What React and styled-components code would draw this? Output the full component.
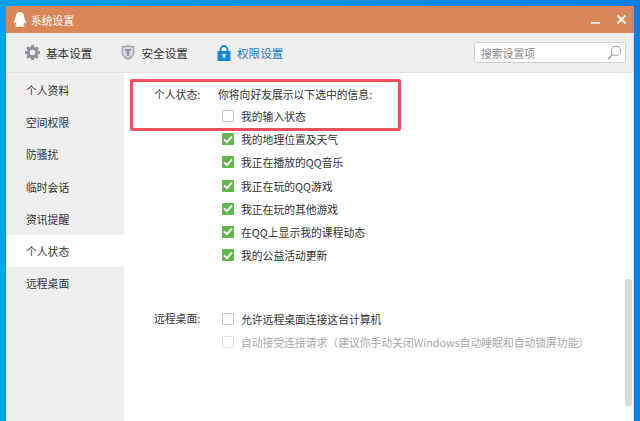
import React from "react";
import styled, { createGlobalStyle } from "styled-components";

const GlobalStyle = createGlobalStyle`
    html, body {
        margin: 0;
        padding: 0;
        height: 421px;
        overflow: hidden;
    }
`;

const Desktop = styled.div`
    width: 640px;
    height: 421px;
    box-sizing: border-box;
    padding: 6px 6px 0 6px;
    overflow: hidden;
    background: linear-gradient(90deg, #00a2ea 0%, #1190e2 50%, #0b7fe6 100%);
    font-family: "Noto Sans CJK SC", "Noto Sans", sans-serif;
    font-size: 10.8px;
    color: #333;
`;

const Window = styled.div`
    position: relative;
    height: 415px;
    display: flex;
    flex-direction: column;
    background: #fff;
    border-left: 1px solid #e4e6e5;
    border-right: 1px solid #d5d7d6;
`;

const TitleBar = styled.div`
    height: 27px;
    flex: none;
    display: flex;
    align-items: center;
    padding: 0 5px 0 8px;
    margin: 0 -1px;
    background: #d98659;
    color: #fff;
`;

const WindowTitle = styled.span`
    margin-left: 5px;
    flex: 1;
    font-size: 10.8px;
`;

const WindowButton = styled.button`
    width: 15px;
    height: 15px;
    margin-left: 11px;
    padding: 0;
    border: 0;
    background: none;
    display: flex;
    align-items: center;
    justify-content: center;
`;

const Toolbar = styled.div`
    height: 39px;
    flex: none;
    display: flex;
    align-items: center;
    padding: 0 7px 0 18px;
    background: #eef0ef;
    border-bottom: 1px solid #e2e3e2;
`;

const Tab = styled.div`
    width: 95.5px;
    display: flex;
    align-items: center;
    gap: 6px;
    font-size: 11.6px;
    color: ${(p) => (p.$active ? "#1b78c0" : "#333")};
`;

const TabIcon = styled.span`
    width: 15px;
    height: 16px;
    display: flex;
    align-items: center;
    justify-content: center;
`;

const SearchBox = styled.div`
    margin-left: auto;
    width: 152px;
    height: 21px;
    box-sizing: border-box;
    display: flex;
    align-items: center;
    justify-content: space-between;
    padding: 0 3px 0 6px;
    background: #fff;
    border: 1px solid #cfd1d0;
    border-radius: 2px;
    color: #888;
`;

const Body = styled.div`
    flex: 1;
    display: flex;
    min-height: 0;
`;

const Sidebar = styled.div`
    width: 117px;
    flex: none;
    box-sizing: border-box;
    padding-top: 1px;
    background: #efefef;
`;

const SideItem = styled.div`
    height: 32.2px;
    display: flex;
    align-items: center;
    padding-left: 19px;
    background: ${(p) => (p.$active ? "#fff" : "transparent")};
`;

const Panel = styled.div`
    flex: 1;
    padding: 10px 0 0 30px;
`;

const Section = styled.div`
    display: grid;
    grid-template-columns: 64px 1fr;
    margin-bottom: 40.6px;
`;

const SectionLabel = styled.div`
    height: 23.2px;
    line-height: 23.2px;
`;

const Options = styled.div`
    display: flex;
    flex-direction: column;
`;

const Note = styled.div`
    height: 21.4px;
    line-height: 23.2px;
`;

const OptionRow = styled.div`
    height: 23.2px;
    display: flex;
    align-items: center;
    gap: 7px;
    padding-left: 4px;
    color: ${(p) => (p.$disabled ? "#a9a9a9" : "#333")};
`;

const Box = styled.span`
    width: 12px;
    height: 12px;
    box-sizing: border-box;
    flex: none;
    display: flex;
    align-items: center;
    justify-content: center;
    border-radius: 1px;
    background: ${(p) => (p.$checked ? "#62b64f" : "#fff")};
    border: ${(p) =>
        p.$checked ? "0" : `1px solid ${p.$disabled ? "#e2e2e2" : "#c4c4c4"}`};
`;

const Highlight = styled.div`
    position: absolute;
    left: 123px;
    top: 73px;
    width: 271px;
    height: 52px;
    box-sizing: border-box;
    border: 3px solid #f1515a;
    border-radius: 2px;
`;

const ScrollThumb = styled.div`
    position: absolute;
    right: 1px;
    top: 273px;
    width: 7px;
    height: 127px;
    border-radius: 3px;
    background: #d9d9d9;
`;

const Penguin = () => (
    <svg width="12" height="15" viewBox="0 0 12 15">
        <path
            fill="#fff"
            d="M6 0C3.300 0 1.800 2 1.800 4.600c0 .8-.2 1.300-.6 2C.5 7.900 0 9.300 0 10.500c0 .8.5.9 1 .3l.6-.8c.3.9.7 1.600 1.200 2.100-.9.3-1.300.8-1.300 1.300C1.500 14.500 2.800 15 4.200 15c.7 0 1.300-.2 1.800-.5.500.3 1.100.5 1.800.5 1.400 0 2.700-.5 2.700-1.100 0-.5-.4-1-1.300-1.300.5-.5.9-1.200 1.200-2.100l.6.800c.5.600 1 .5 1-.3 0-1.200-.5-2.600-1.200-3.900-.4-.7-.6-1.200-.6-2C10.200 2 8.700 0 6 0z"
        />
    </svg>
);

const GearIcon = () => (
    <svg width="15" height="15" viewBox="0 0 15 15">
        <path
            fill="#8b959a"
            fillRule="evenodd"
            d="M6.200 0h2.600l.3 2c.4.1.8.3 1.100.5l1.700-1.100 1.800 1.800-1.100 1.700c.2.300.4.700.5 1.100l1.900.3v2.600l-1.900.3c-.1.400-.3.800-.5 1.100l1.100 1.700-1.800 1.800-1.700-1.100c-.3.200-.7.400-1.100.5l-.3 1.900H6.200l-.3-1.900c-.4-.1-.8-.3-1.100-.5l-1.700 1.100-1.800-1.800 1.100-1.700c-.2-.3-.4-.7-.5-1.100L0 8.800V6.200l1.900-.3c.1-.4.300-.8.500-1.100L1.300 3.100l1.800-1.800 1.700 1.100c.3-.2.7-.4 1.100-.5zM7.500 4.800a2.700 2.700 0 1 0 0 5.400 2.700 2.700 0 0 0 0-5.400z"
        />
    </svg>
);

const ShieldIcon = () => (
    <svg width="14" height="15" viewBox="0 0 14 15">
        <path fill="#a4abad" d="M.5 1.200C2.500 1.200 5 .8 7 0c2 .8 4.500 1.200 6.500 1.200v6.300C13.500 11 10.500 13.500 7 15 3.500 13.500.5 11 .5 7.500z" />
        <path fill="#d3d7d8" d="M2 2.500c1.800-.1 3.500-.4 5-1 1.500.6 3.200.9 5 1v5c0 2.600-2.300 4.600-5 5.800C4.300 12.100 2 10.100 2 7.500z" />
        <path fill="#8d9598" d="M4 4h6v2H8.100v5.300H5.900V6H4z" />
    </svg>
);

const LockIcon = () => (
    <svg width="14" height="16" viewBox="0 0 14 16">
        <path fill="none" stroke="#1b86d8" strokeWidth="1.800" d="M3.500 7V4.500a3.500 3.500 0 0 1 7 0V7" />
        <rect x="0.500" y="6" width="13" height="10" rx="1" fill="#1b86d8" />
        <path fill="#fff" d="M5.200 9h3.600v1.600H7.800V13H6.200v-2.400h-1z" />
    </svg>
);

const SearchIcon = () => (
    <svg width="15" height="15" viewBox="0 0 15 15" fill="none" stroke="#a3a3a3" strokeWidth="1">
        <circle cx="9" cy="6" r="4.700" />
        <path d="M5.600 9.400 1 14" strokeWidth="1.500" />
    </svg>
);

const Check = () => (
    <svg width="10" height="9" viewBox="0 0 10 9" fill="none" stroke="#fff" strokeWidth="1.900">
        <path d="M1 4.300 3.900 7.200 9 1.500" />
    </svg>
);

const Option = ({ checked, disabled, children }) => (
    <OptionRow $disabled={disabled}>
        <Box $checked={checked} $disabled={disabled}>
            {checked && <Check />}
        </Box>
        <span>{children}</span>
    </OptionRow>
);

const sideItems = ["个人资料", "空间权限", "防骚扰", "临时会话", "资讯提醒", "个人状态", "远程桌面"];

const statusOptions = [
    "我的地理位置及天气",
    "我正在播放的QQ音乐",
    "我正在玩的QQ游戏",
    "我正在玩的其他游戏",
    "在QQ上显示我的课程动态",
    "我的公益活动更新",
];

const App = () => (
    <Desktop>
        <GlobalStyle />
        <Window>
            <TitleBar>
                <Penguin />
                <WindowTitle>系统设置</WindowTitle>
                <WindowButton aria-label="最小化">
                    <svg width="11" height="11" viewBox="0 0 11 11">
                        <rect x="1" y="8" width="9" height="1.600" fill="#fff" />
                    </svg>
                </WindowButton>
                <WindowButton aria-label="关闭">
                    <svg width="11" height="11" viewBox="0 0 11 11" stroke="#fff" strokeWidth="1.800">
                        <path d="M1.500 1.500 9.500 9.500M9.500 1.500 1.500 9.500" />
                    </svg>
                </WindowButton>
            </TitleBar>
            <Toolbar>
                <Tab>
                    <TabIcon><GearIcon /></TabIcon>基本设置
                </Tab>
                <Tab>
                    <TabIcon><ShieldIcon /></TabIcon>安全设置
                </Tab>
                <Tab $active>
                    <TabIcon><LockIcon /></TabIcon>权限设置
                </Tab>
                <SearchBox>
                    搜索设置项
                    <SearchIcon />
                </SearchBox>
            </Toolbar>
            <Body>
                <Sidebar>
                    {sideItems.map((item) => (
                        <SideItem key={item} $active={item === "个人状态"}>
                            {item}
                        </SideItem>
                    ))}
                </Sidebar>
                <Panel>
                    <Section>
                        <SectionLabel>个人状态:</SectionLabel>
                        <Options>
                            <Note>你将向好友展示以下选中的信息:</Note>
                            <Option>我的输入状态</Option>
                            {statusOptions.map((item) => (
                                <Option key={item} checked>
                                    {item}
                                </Option>
                            ))}
                        </Options>
                    </Section>
                    <Section>
                        <SectionLabel>远程桌面:</SectionLabel>
                        <Options>
                            <Option>允许远程桌面连接这台计算机</Option>
                            <Option disabled>
                                自动接受连接请求（建议你手动关闭Windows自动睡眠和自动锁屏功能）
                            </Option>
                        </Options>
                    </Section>
                </Panel>
            </Body>
            <Highlight />
            <ScrollThumb />
        </Window>
    </Desktop>
);

export default App;
